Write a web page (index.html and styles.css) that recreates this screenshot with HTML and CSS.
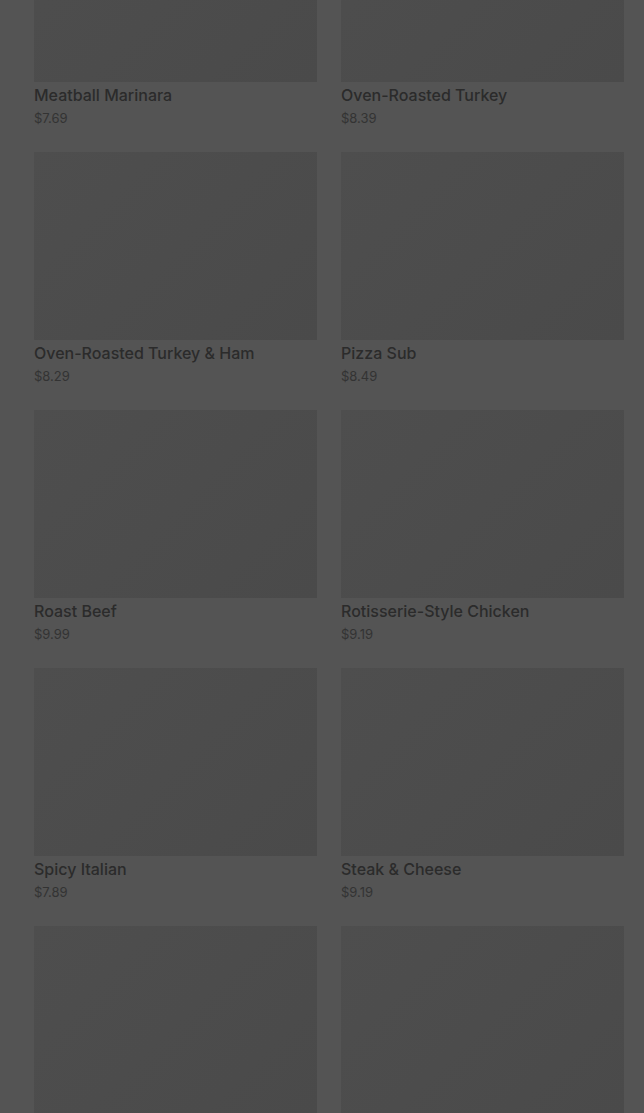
FILE: index.html
```html
<!DOCTYPE html>
<html lang="en">
<head>
    <meta charset="UTF-8">
    <meta name="viewport" content="width=device-width, initial-scale=1.0">
    <title>Menu</title>
    <link rel="stylesheet" href="styles.css">
</head>
<body>
    <div class="menu">
        <div class="item">
            <div class="thumb"></div>
            <div class="name">Meatball Marinara</div>
            <div class="price">$7.69</div>
        </div>
        <div class="item">
            <div class="thumb"></div>
            <div class="name">Oven-Roasted Turkey</div>
            <div class="price">$8.39</div>
        </div>
        <div class="item">
            <div class="thumb"></div>
            <div class="name">Oven-Roasted Turkey &amp; Ham</div>
            <div class="price">$8.29</div>
        </div>
        <div class="item">
            <div class="thumb"></div>
            <div class="name">Pizza Sub</div>
            <div class="price">$8.49</div>
        </div>
        <div class="item">
            <div class="thumb"></div>
            <div class="name">Roast Beef</div>
            <div class="price">$9.99</div>
        </div>
        <div class="item">
            <div class="thumb"></div>
            <div class="name">Rotisserie-Style Chicken</div>
            <div class="price">$9.19</div>
        </div>
        <div class="item">
            <div class="thumb"></div>
            <div class="name">Spicy Italian</div>
            <div class="price">$7.89</div>
        </div>
        <div class="item">
            <div class="thumb"></div>
            <div class="name">Steak &amp; Cheese</div>
            <div class="price">$9.19</div>
        </div>
        <div class="item">
            <div class="thumb"></div>
        </div>
        <div class="item">
            <div class="thumb"></div>
        </div>
    </div>
</body>
</html>
```

FILE: styles.css
```css
body {
    margin: 0;
    padding: 0;
    background-color: #545454;
    font-family: Inter, "Noto Sans", sans-serif;
    height: 1113px;
    overflow: hidden;
}
.menu {
    display: grid;
    grid-template-columns: 283px 283px;
    gap: 24px;
    padding: 0 20px 0 34px;
    margin-top: -106px;
}
.thumb {
    height: 188px;
    background: linear-gradient(135deg, #4e4e4e, #4a4a4a);
}
.name {
    margin-top: 1px;
    font-size: 16px;
    font-weight: 500;
    line-height: 24px;
    color: #2b2b2b;
}
.price {
    margin-top: 1px;
    font-size: 13px;
    line-height: 20px;
    color: #333333;
}
```
